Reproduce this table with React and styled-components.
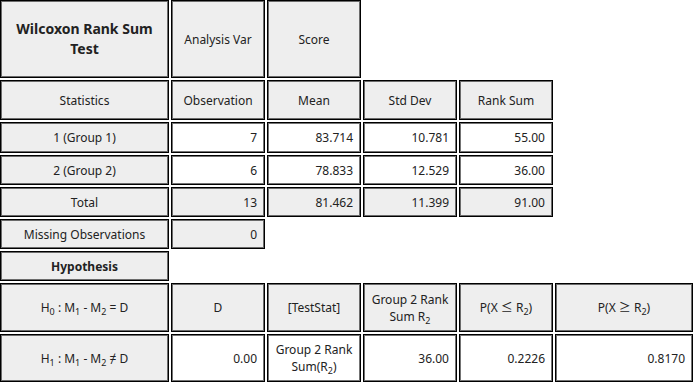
import styled, { createGlobalStyle } from 'styled-components';

const GlobalStyle = createGlobalStyle`
    body {
        margin: 0;
        background: #ffffff;
        font-family: "Noto Sans", "Noto Sans CJK KR", sans-serif;
        color: #222;
    }
`

const rows = [
    [
        { text: 'Wilcoxon Rank Sum Test', title: true },
        { text: 'Analysis Var' },
        { text: 'Score' },
    ],
    [
        { text: 'Statistics' },
        { text: 'Observation' },
        { text: 'Mean' },
        { text: 'Std Dev' },
        { text: 'Rank Sum' },
    ],
    [
        { text: '1 (Group 1)' },
        { text: '7', num: true, white: true },
        { text: '83.714', num: true, white: true },
        { text: '10.781', num: true, white: true },
        { text: '55.00', num: true, white: true },
    ],
    [
        { text: '2 (Group 2)' },
        { text: '6', num: true, white: true },
        { text: '78.833', num: true, white: true },
        { text: '12.529', num: true, white: true },
        { text: '36.00', num: true, white: true },
    ],
    [
        { text: 'Total' },
        { text: '13', num: true },
        { text: '81.462', num: true },
        { text: '11.399', num: true },
        { text: '91.00', num: true },
    ],
    [
        { text: 'Missing Observations' },
        { text: '0', num: true },
    ],
    [
        { text: 'Hypothesis', bold: true },
    ],
    [
        { text: <>H<sub>0</sub> : M<sub>1</sub> - M<sub>2</sub> = D</> },
        { text: 'D' },
        { text: '[TestStat]' },
        { text: <>Group 2 Rank<br />Sum R<sub>2</sub></> },
        { text: <>P(X ≤ R<sub>2</sub>)</> },
        { text: <>P(X ≥ R<sub>2</sub>)</> },
    ],
    [
        { text: <>H<sub>1</sub> : M<sub>1</sub> - M<sub>2</sub> ≠ D</> },
        { text: '0.00', num: true, white: true },
        { text: <>Group 2 Rank<br />Sum(R<sub>2</sub>)</>, white: true },
        { text: '36.00', num: true, white: true },
        { text: '0.2226', num: true, white: true },
        { text: '0.8170', num: true, white: true },
    ],
]

export default function App() {
    return (
        <>
            <GlobalStyle />
            <Table>
                {rows.map((row, r) =>
                    row.map((cell, c) => (
                        <Cell
                            key={`${r}-${c}`}
                            $first={c === 0}
                            $num={cell.num}
                            $white={cell.white}
                            $bold={cell.bold}
                            $title={cell.title}
                        >
                            <Label>{cell.text}</Label>
                        </Cell>
                    ))
                )}
            </Table>
        </>
    );
}

const Table = styled.div`
    display: grid;
    grid-template-columns: 169px 94px 94px 94px 94px 138px;
    grid-template-rows: 78px 40px 31px 30px 30px 30px 30px 49px 48px;
    gap: 2px;
    width: 694px;
`

const Cell = styled.div`
    box-sizing: border-box;
    border: 1px solid #000;
    box-shadow: inset 0 0 0 1px rgba(0, 0, 0, 0.55);
    background: ${props => props.$white ? '#ffffff' : '#eeeeee'};
    display: flex;
    align-items: center;
    justify-content: ${props => props.$num ? 'flex-end' : 'center'};
    text-align: center;
    padding: ${props => props.$num ? '0 7px 0 4px' : props.$title ? '0 14px' : '0 4px'};
    font-size: ${props => props.$title ? '14px' : '12px'};
    font-weight: ${props => (props.$bold || props.$title) ? 700 : 400};
    line-height: ${props => props.$title ? '20px' : '17px'};
    grid-column-start: ${props => props.$first ? 1 : 'auto'};
`

const Label = styled.span`
    display: block;

    sub {
        font-size: 9px;
        line-height: 0;
        vertical-align: -3px;
    }
`
